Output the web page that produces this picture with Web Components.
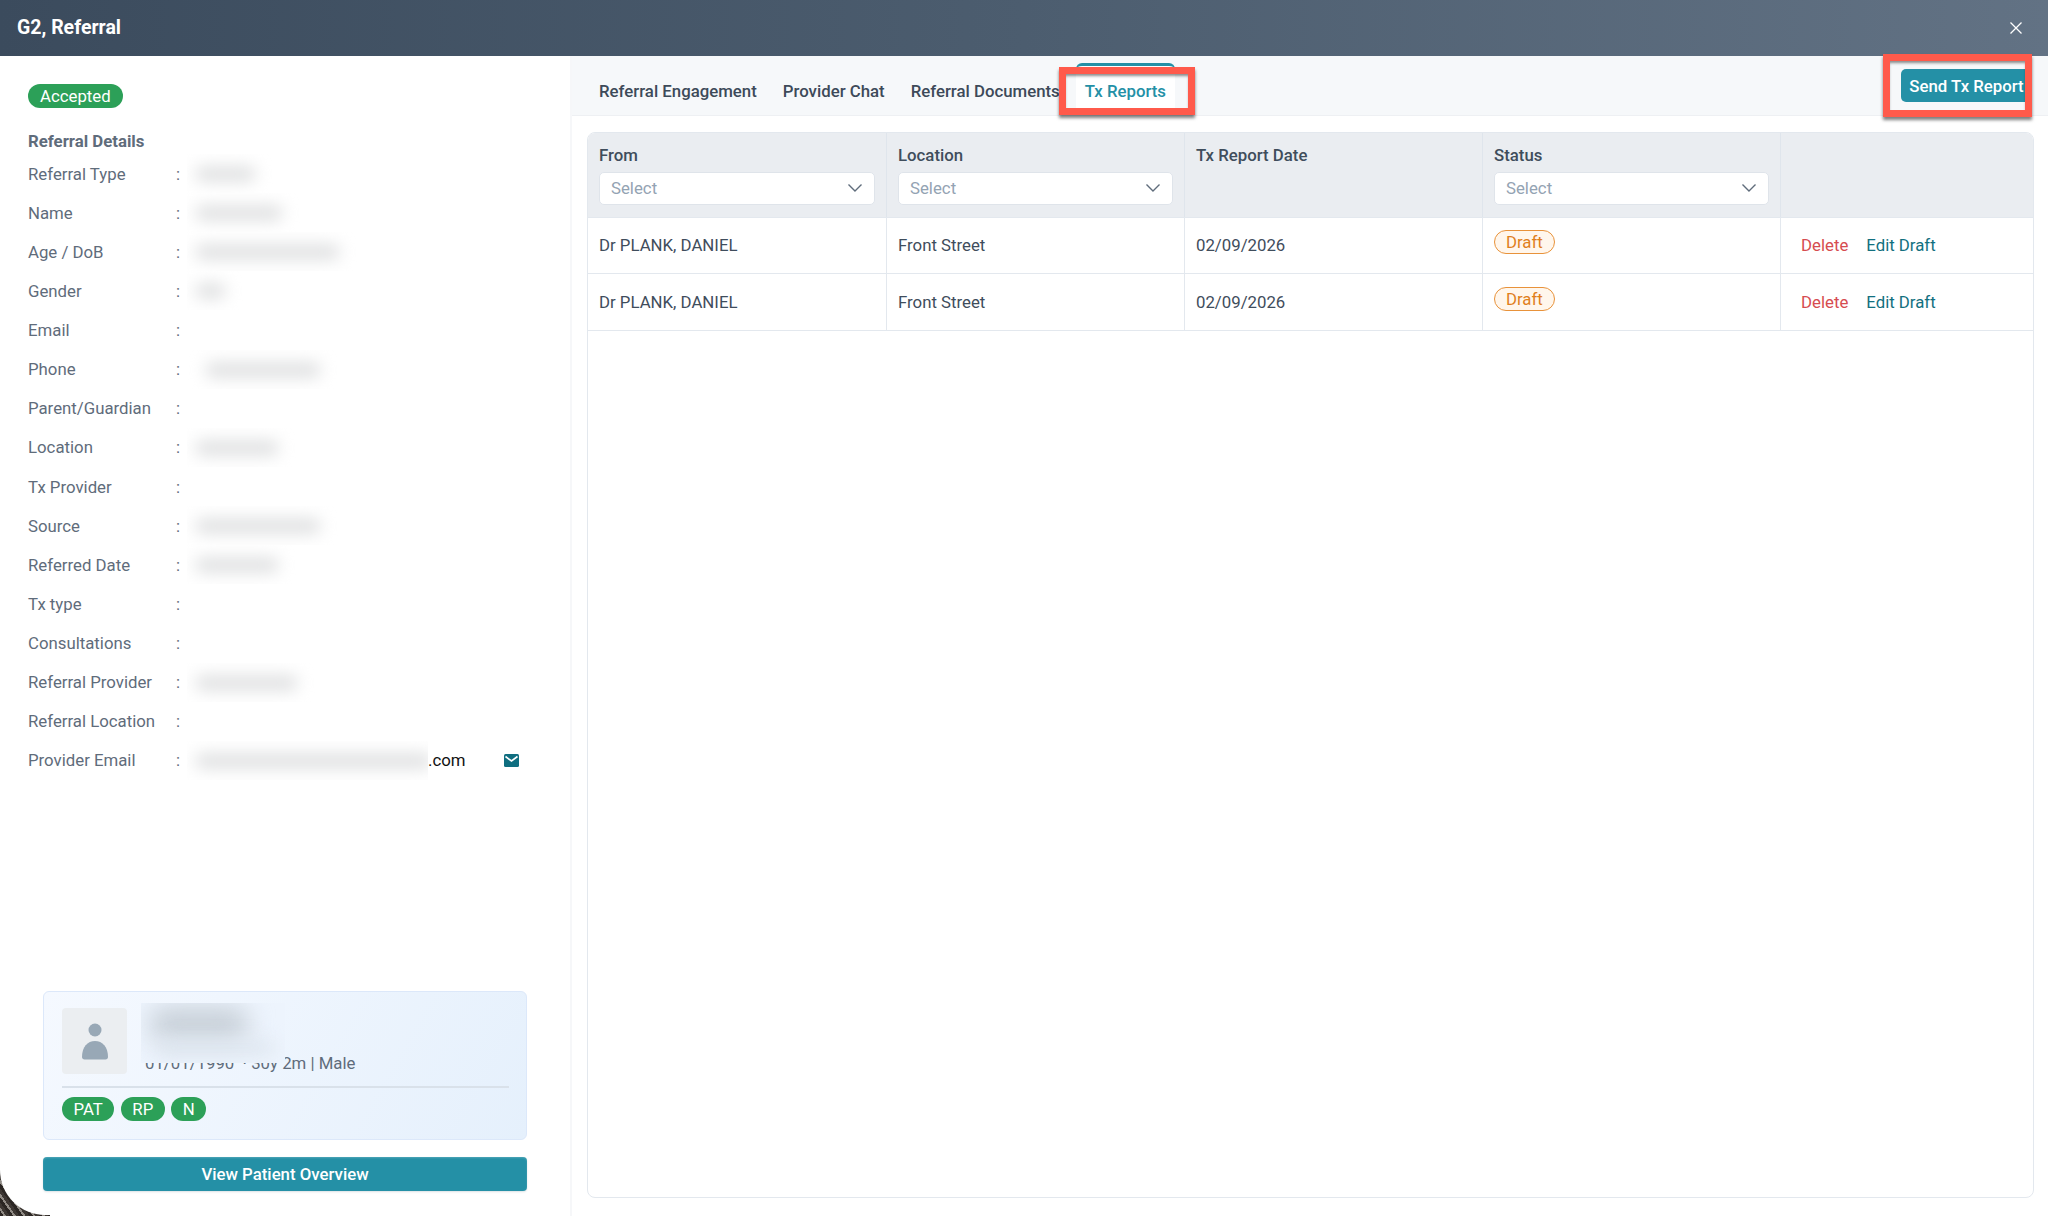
<!DOCTYPE html>
<html>
<head>
<meta charset="utf-8">
<title>G2, Referral</title>
<style>
  html, body { margin: 0; padding: 0; background: #fff; }
  body { width: 2048px; height: 1216px; overflow: hidden; font-family: Roboto, "Liberation Sans", sans-serif; }
</style>
</head>
<body>
<referral-modal heading="G2, Referral">
  <detail-panel slot="left">
    <status-pill slot="status">Accepted</status-pill>
    <detail-row label="Referral Type" blur="65"></detail-row>
    <detail-row label="Name" blur="92"></detail-row>
    <detail-row label="Age / DoB" blur="149"></detail-row>
    <detail-row label="Gender" blur="35"></detail-row>
    <detail-row label="Email"></detail-row>
    <detail-row label="Phone" blur="120" inset="10"></detail-row>
    <detail-row label="Parent/Guardian"></detail-row>
    <detail-row label="Location" blur="88"></detail-row>
    <detail-row label="Tx Provider"></detail-row>
    <detail-row label="Source" blur="130"></detail-row>
    <detail-row label="Referred Date" blur="88"></detail-row>
    <detail-row label="Tx type"></detail-row>
    <detail-row label="Consultations"></detail-row>
    <detail-row label="Referral Provider" blur="107"></detail-row>
    <detail-row label="Referral Location"></detail-row>
    <detail-row label="Provider Email" blur="241" suffix=".com" mail></detail-row>
    <patient-card slot="patient" meta="01/01/1990 &nbsp;· 30y 2m | Male">
      <status-pill>PAT</status-pill>
      <status-pill>RP</status-pill>
      <status-pill>N</status-pill>
    </patient-card>
  </detail-panel>
  <reports-panel slot="right">
    <report-table>
      <report-row from="Dr PLANK, DANIEL" location="Front Street" date="02/09/2026" status="Draft"></report-row>
      <report-row from="Dr PLANK, DANIEL" location="Front Street" date="02/09/2026" status="Draft"></report-row>
    </report-table>
  </reports-panel>
</referral-modal>

<script>
  const COLS = "299px 298px 298px 298px 1fr";

  class ReferralModal extends HTMLElement {
    constructor() {
      super();
      this.attachShadow({ mode: "open" });
      this.shadowRoot.innerHTML = `
<style>
  :host { display: flex; flex-direction: column; width: 2048px; height: 1216px; position: relative; color: #3f4d5c; }
  header {
    flex: 0 0 56px; display: flex; align-items: center; justify-content: space-between;
    padding: 0 25px 0 17px; box-sizing: border-box;
    background: linear-gradient(90deg, #3b4b5d 0%, #4c5d6f 50%, #627284 100%);
    color: #fff; font-size: 19.5px; font-weight: 700;
  }
  header span { position: relative; top: -1px; }
  header svg { display: block; }
  .body { flex: 1; display: flex; min-height: 0; position: relative; }
  .corner {
    position: absolute; left: 0; bottom: 0; width: 50px; height: 50px;
    background: repeating-linear-gradient(55deg, #2b2623 0 3px, #8f8a84 3px 5px, #3d3733 5px 8px);
  }
  ::slotted([slot=left]) { position: relative; }
</style>
<header><span id="title"></span>
  <svg width="14" height="14" viewBox="0 0 14 14" fill="none" stroke="#fff" stroke-width="1.3"><path d="M1.5 1.5l11 11M12.5 1.5l-11 11"/></svg>
</header>
<div class="body">
  <div class="corner"></div>
  <slot name="left"></slot>
  <slot name="right"></slot>
</div>`;
    }
    connectedCallback() {
      this.shadowRoot.getElementById("title").textContent = this.getAttribute("heading");
    }
  }

  class DetailPanel extends HTMLElement {
    constructor() {
      super();
      this.attachShadow({ mode: "open" });
      this.shadowRoot.innerHTML = `
<style>
  :host {
    display: flex; flex-direction: column; flex: 0 0 570px; width: 570px; box-sizing: border-box;
    padding: 28px 0 24px 28px; background: #fff; border-bottom-left-radius: 45px;
    margin-bottom: 1px;
  }
  .status { display: flex; height: 24px; }
  h2 { margin: 22px 0 2px; font-size: 16.8px; line-height: 22px; font-weight: 700; color: #5f6c7b; }
  .bottom { margin-top: auto; margin-left: 15px; margin-right: 43px; }
  button {
    display: block; width: 100%; height: 34px; margin-top: 17px; padding: 0 0 1px; border: 0; border-radius: 4px;
    background: #2490a6; color: #fff; font: 500 16.8px Roboto, sans-serif;
    box-shadow: inset 0 1px 2px rgba(255,255,255,.2), 0 1px 2px rgba(30,60,80,.15);
  }
</style>
<div class="status"><slot name="status"></slot></div>
<h2>Referral Details</h2>
<slot></slot>
<div class="bottom">
  <slot name="patient"></slot>
  <button>View Patient Overview</button>
</div>`;
    }
  }

  class StatusPill extends HTMLElement {
    constructor() {
      super();
      this.attachShadow({ mode: "open" });
      this.shadowRoot.innerHTML = `
<style>
  :host {
    display: inline-flex; align-items: center; height: 24px; padding: 0 12px 1px; box-sizing: border-box;
    border-radius: 12px; background: #2ca058; color: #fff; font-size: 16.8px; line-height: 22px;
  }
</style><slot></slot>`;
    }
  }

  class DetailRow extends HTMLElement {
    constructor() {
      super();
      this.attachShadow({ mode: "open" });
    }
    connectedCallback() {
      const blur = this.getAttribute("blur");
      const inset = this.getAttribute("inset") || 0;
      const suffix = this.getAttribute("suffix");
      this.shadowRoot.innerHTML = `
<style>
  :host { display: flex; align-items: center; height: 39.13px; font-size: 16.8px; color: #5f6c7b; }
  .label { flex: 0 0 148px; white-space: nowrap; }
  .colon { flex: 0 0 11px; }
  .value { display: flex; align-items: center; }
  .mask { overflow: hidden; height: 39px; position: relative; }
  .blob {
    height: 16px; margin: 12px 0 0 ${8 + Number(inset)}px; background: #e0e1e2; border-radius: 8px; filter: blur(8px);
  }
  .suffix { color: #111; }
  svg { display: block; margin-left: 38px; }
</style>
<span class="label">${this.getAttribute("label")}</span>
<span class="colon">:</span>
<span class="value">
  ${blur ? `<span class="mask" style="width:${suffix ? blur : Number(blur) + 30}px"><div class="blob" style="width:${Number(blur) - 4}px"></div></span>` : ""}
  ${suffix ? `<span class="suffix">${suffix}</span>` : ""}
  ${this.hasAttribute("mail") ? `<svg width="15" height="13" viewBox="0 0 15 13"><rect width="15" height="13" rx="1.5" fill="#0f6e80"/><path d="M1.5 2.5l6 4.5 6-4.5" fill="none" stroke="#fff" stroke-width="1.6"/></svg>` : ""}
</span>`;
    }
  }

  class PatientCard extends HTMLElement {
    constructor() {
      super();
      this.attachShadow({ mode: "open" });
    }
    connectedCallback() {
      this.shadowRoot.innerHTML = `
<style>
  :host {
    display: block; box-sizing: border-box; height: 149px; padding: 16px 17px 0 18px;
    border: 1px solid #dce8fa; border-radius: 6px;
    background: linear-gradient(120deg, #f5f9ff 0%, #e5f0fc 100%);
  }
  .top { display: flex; height: 66px; position: relative; }
  .avatar {
    flex: 0 0 65px; height: 66px; border-radius: 4px; background: #ebeef1;
    display: flex; align-items: center; justify-content: center;
  }
  .meta { align-self: flex-end; margin: 0 0 1px 18px; font-size: 16.8px; line-height: 20px; color: #5f6c7b; white-space: nowrap; }
  .mask {
    position: absolute; left: 79px; top: -5px; width: 144px; height: 60px; overflow: hidden;
    background: #edf4fd;
  }
  .mask .a { position: absolute; left: 8px; top: 4px; width: 100px; height: 34px; background: #c8d0d8; border-radius: 16px; filter: blur(12px); }
  .mask .b { position: absolute; left: 14px; top: 38px; width: 120px; height: 14px; background: #dde5ee; border-radius: 7px; filter: blur(9px); }
  hr { margin: 12px 0 0; border: 0; border-top: 2px solid #d9e1ea; }
  .pills { display: flex; gap: 6.5px; margin-top: 9px; }
  ::slotted(status-pill) { padding: 0 11.5px 1px; }
</style>
<div class="top">
  <div class="avatar">
    <svg width="26" height="37" viewBox="0 0 26 37" fill="#98a8b6"><circle cx="13" cy="7" r="6.5"/><path d="M0 34c0-10 5.500-16 13-16s13 6 13 16c0 1.500-1 2.500-2.500 2.500h-21C1 36.500 0 35.500 0 34z"/></svg>
  </div>
  <div class="meta">${this.getAttribute("meta")}</div>
  <div class="mask"><div class="a"></div><div class="b"></div></div>
</div>
<hr>
<div class="pills"><slot></slot></div>`;
    }
  }

  class ReportsPanel extends HTMLElement {
    constructor() {
      super();
      this.attachShadow({ mode: "open" });
      this.shadowRoot.innerHTML = `
<style>
  :host { display: flex; flex-direction: column; flex: 1; min-width: 0; border-left: 2px solid #f6f7f9; position: relative; }
  .bar {
    flex: 0 0 60px; box-sizing: border-box; display: flex; align-items: center;
    padding: 0 16px 0 27px; background: #f6f8fa; border-bottom: 1px solid #eef0f3;
    font-size: 16.8px; font-weight: 500; color: #3d4a59; position: relative;
  }
  .tab { margin-right: 26px; white-space: nowrap; line-height: 20px; position: relative; top: 5px; }
  .tab.docs { margin-right: 16px; }
  .tab.active {
    align-self: flex-end; top: 0; margin-right: 0; height: 52px; padding: 15px 9px 0; box-sizing: border-box;
    background: #fff; color: #2490a6; border-top: 3px solid #2490a6; border-radius: 6px 6px 0 0;
  }
  .send {
    margin-left: auto; height: 33px; width: 131px; padding: 0; border: 0; border-radius: 5px 0 0 5px;
    background: #2490a6; color: #fff; font: 500 16.8px Roboto, sans-serif; position: relative; top: 0;
  }
  .content { flex: 1; padding: 16px 14px 16px 15px; min-height: 0; display: flex; margin-bottom: 2px; }
  .hl {
    position: absolute; box-sizing: border-box; border: 7px solid #ff5a4b;
    box-shadow: 0 3px 3px rgba(0,0,0,.5), inset 0 3px 3px -1px rgba(0,0,0,.45);
    pointer-events: none;
  }
  .hl.t { left: 487px; top: 11px; width: 136px; height: 48px; }
  .hl.b { left: 1311px; top: -2px; width: 149px; height: 63px; }
</style>
<div class="bar">
  <span class="tab">Referral Engagement</span>
  <span class="tab">Provider Chat</span>
  <span class="tab docs">Referral Documents</span>
  <span class="tab active">Tx Reports</span>
  <button class="send">Send Tx Report</button>
</div>
<div class="content"><slot></slot></div>
<div class="hl t"></div>
<div class="hl b"></div>`;
    }
  }

  class FilterSelect extends HTMLElement {
    constructor() {
      super();
      this.attachShadow({ mode: "open" });
      this.shadowRoot.innerHTML = `
<style>
  :host {
    display: flex; align-items: center; justify-content: space-between; box-sizing: border-box;
    height: 33px; margin-top: 6px; padding: 0 11px 0 11px; background: #fff;
    border: 1px solid #dfe4ea; border-radius: 5px; color: #94a3b3; font-size: 16.8px; font-weight: 400;
  }
</style>
<span>Select</span>
<svg width="16" height="10" viewBox="0 0 16 10" fill="none" stroke="#5f6c7b" stroke-width="1.4"><path d="M1.500 1.500L8 8l6.500-6.500"/></svg>`;
    }
  }

  class ReportTable extends HTMLElement {
    constructor() {
      super();
      this.attachShadow({ mode: "open" });
      this.shadowRoot.innerHTML = `
<style>
  :host { display: block; flex: 1; box-sizing: border-box; border: 1px solid #e3e8ee; border-radius: 8px; overflow: hidden; }
  .head { display: grid; grid-template-columns: ${COLS}; height: 83.5px; background: #eaedf1; border-bottom: 1px solid #e3e8ee; font-size: 16.8px; font-weight: 500; color: #3f4d5c; }
  .head > div { padding: 10.5px 11px 0 11px; border-right: 1px solid #dfe5ec; line-height: 22px; }
  .head > div:last-child { border-right: 0; }
</style>
<div class="head">
  <div>From<filter-select></filter-select></div>
  <div>Location<filter-select></filter-select></div>
  <div>Tx Report Date</div>
  <div>Status<filter-select></filter-select></div>
  <div></div>
</div>
<slot></slot>`;
    }
  }

  class ReportRow extends HTMLElement {
    constructor() {
      super();
      this.attachShadow({ mode: "open" });
    }
    connectedCallback() {
      this.shadowRoot.innerHTML = `
<style>
  :host { display: grid; grid-template-columns: ${COLS}; height: 56.5px; box-sizing: border-box; border-bottom: 1px solid #e3e8ee; font-size: 16.8px; color: #3f4d5c; }
  .c { display: flex; align-items: center; padding: 0 11px; border-right: 1px solid #e3e8ee; }
  .c:last-child { border-right: 0; padding-left: 20px; gap: 18px; }
  .draft {
    display: inline-flex; align-items: center; height: 24px; padding: 0 11px; box-sizing: border-box; margin-top: -6px;
    border: 1px solid #e8923a; border-radius: 12px; background: #fff6ec; color: #e07f1c;
  }
  .del { color: #d64c50; }
  .edit { color: #12707f; }
</style>
<div class="c">${this.getAttribute("from")}</div>
<div class="c">${this.getAttribute("location")}</div>
<div class="c">${this.getAttribute("date")}</div>
<div class="c"><span class="draft">${this.getAttribute("status")}</span></div>
<div class="c"><span class="del">Delete</span><span class="edit">Edit Draft</span></div>`;
    }
  }

  customElements.define("filter-select", FilterSelect);
  customElements.define("status-pill", StatusPill);
  customElements.define("detail-row", DetailRow);
  customElements.define("patient-card", PatientCard);
  customElements.define("detail-panel", DetailPanel);
  customElements.define("report-row", ReportRow);
  customElements.define("report-table", ReportTable);
  customElements.define("reports-panel", ReportsPanel);
  customElements.define("referral-modal", ReferralModal);
</script>
</body>
</html>
